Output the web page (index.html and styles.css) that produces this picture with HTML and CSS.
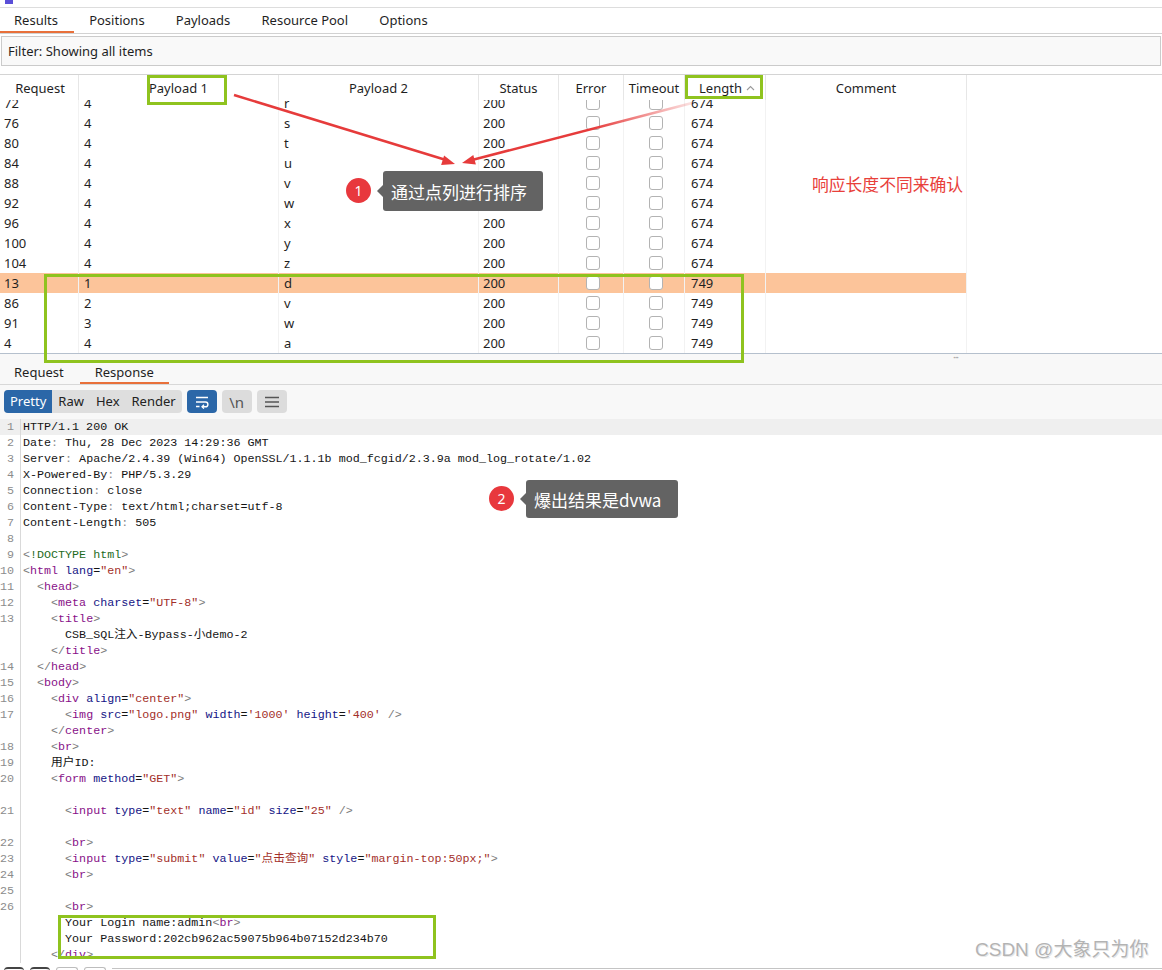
FILE: index.html
```html
<!DOCTYPE html>
<html lang="zh">
<head>
<meta charset="utf-8">
<title>Intruder Results</title>
<link rel="stylesheet" href="styles.css">
</head>
<body>
<div class="topstrip"><div class="appicon"></div></div>

<div class="tabs">
  <div class="tab first active">Results</div>
  <div class="tab">Positions</div>
  <div class="tab">Payloads</div>
  <div class="tab">Resource Pool</div>
  <div class="tab">Options</div>
</div>

<div class="filter">Filter: Showing all items</div>

<div class="table">
  <div class="thead">
    <div class="th c1">Request</div>
    <div class="th c2">Payload 1</div>
    <div class="th c3">Payload 2</div>
    <div class="th c4">Status</div>
    <div class="th c5">Error</div>
    <div class="th c6">Timeout</div>
    <div class="th c7">Length <svg class="caret" width="9" height="6" viewBox="0 0 9 6"><path d="M1 5 L4.5 1.5 L8 5" fill="none" stroke="#9a9a9a" stroke-width="1.1"/></svg></div>
    <div class="th c8">Comment</div>
  </div>
  <div class="tbody">
    <div class="rows">
      <div class="tr"><div class="td c1">72</div><div class="td c2">4</div><div class="td c3">r</div><div class="td c4">200</div><div class="td c5 cb"><i></i></div><div class="td c6 cb"><i></i></div><div class="td c7">674</div><div class="td c8"></div></div>
      <div class="tr"><div class="td c1">76</div><div class="td c2">4</div><div class="td c3">s</div><div class="td c4">200</div><div class="td c5 cb"><i></i></div><div class="td c6 cb"><i></i></div><div class="td c7">674</div><div class="td c8"></div></div>
      <div class="tr"><div class="td c1">80</div><div class="td c2">4</div><div class="td c3">t</div><div class="td c4">200</div><div class="td c5 cb"><i></i></div><div class="td c6 cb"><i></i></div><div class="td c7">674</div><div class="td c8"></div></div>
      <div class="tr"><div class="td c1">84</div><div class="td c2">4</div><div class="td c3">u</div><div class="td c4">200</div><div class="td c5 cb"><i></i></div><div class="td c6 cb"><i></i></div><div class="td c7">674</div><div class="td c8"></div></div>
      <div class="tr"><div class="td c1">88</div><div class="td c2">4</div><div class="td c3">v</div><div class="td c4">200</div><div class="td c5 cb"><i></i></div><div class="td c6 cb"><i></i></div><div class="td c7">674</div><div class="td c8"></div></div>
      <div class="tr"><div class="td c1">92</div><div class="td c2">4</div><div class="td c3">w</div><div class="td c4">200</div><div class="td c5 cb"><i></i></div><div class="td c6 cb"><i></i></div><div class="td c7">674</div><div class="td c8"></div></div>
      <div class="tr"><div class="td c1">96</div><div class="td c2">4</div><div class="td c3">x</div><div class="td c4">200</div><div class="td c5 cb"><i></i></div><div class="td c6 cb"><i></i></div><div class="td c7">674</div><div class="td c8"></div></div>
      <div class="tr"><div class="td c1">100</div><div class="td c2">4</div><div class="td c3">y</div><div class="td c4">200</div><div class="td c5 cb"><i></i></div><div class="td c6 cb"><i></i></div><div class="td c7">674</div><div class="td c8"></div></div>
      <div class="tr"><div class="td c1">104</div><div class="td c2">4</div><div class="td c3">z</div><div class="td c4">200</div><div class="td c5 cb"><i></i></div><div class="td c6 cb"><i></i></div><div class="td c7">674</div><div class="td c8"></div></div>
      <div class="tr sel"><div class="td c1">13</div><div class="td c2">1</div><div class="td c3">d</div><div class="td c4">200</div><div class="td c5 cb"><i></i></div><div class="td c6 cb"><i></i></div><div class="td c7">749</div><div class="td c8"></div></div>
      <div class="tr"><div class="td c1">86</div><div class="td c2">2</div><div class="td c3">v</div><div class="td c4">200</div><div class="td c5 cb"><i></i></div><div class="td c6 cb"><i></i></div><div class="td c7">749</div><div class="td c8"></div></div>
      <div class="tr"><div class="td c1">91</div><div class="td c2">3</div><div class="td c3">w</div><div class="td c4">200</div><div class="td c5 cb"><i></i></div><div class="td c6 cb"><i></i></div><div class="td c7">749</div><div class="td c8"></div></div>
      <div class="tr"><div class="td c1">4</div><div class="td c2">4</div><div class="td c3">a</div><div class="td c4">200</div><div class="td c5 cb"><i></i></div><div class="td c6 cb"><i></i></div><div class="td c7">749</div><div class="td c8"></div></div>
    </div>
  </div>
</div>

<div class="split"><span class="dots">···</span></div>

<div class="subtabs">
  <div class="tab first">Request</div>
  <div class="tab active">Response</div>
</div>

<div class="toolbar">
  <div class="seg"><span class="on">Pretty</span><span>Raw</span><span>Hex</span><span>Render</span></div>
  <div class="ibtn blue"><svg width="16" height="14" viewBox="0 0 16 14"><path d="M2 2.5 H14 M2 7 H11.5 A2.4 2.4 0 0 1 11.5 11.8 H8.5 M2 11.5 H5.5" fill="none" stroke="#fff" stroke-width="1.4"/><path d="M10 9.8 L8 11.8 L10 13.6" fill="none" stroke="#fff" stroke-width="1.3"/></svg></div>
  <div class="ibtn nl">\n</div>
  <div class="ibtn"><svg width="16" height="12" viewBox="0 0 16 12"><path d="M1 1.5 H15 M1 6 H15 M1 10.5 H15" stroke="#555" stroke-width="1.3"/></svg></div>
</div>

<div class="code">
  <div class="row cur"><span class="ln">1</span><span class="src">HTTP/1.1 200 OK</span></div>
  <div class="row"><span class="ln">2</span><span class="src">Date<span class="c">:</span> Thu, 28 Dec 2023 14:29:36 GMT</span></div>
  <div class="row"><span class="ln">3</span><span class="src">Server<span class="c">:</span> Apache/2.4.39 (Win64) OpenSSL/1.1.1b mod_fcgid/2.3.9a mod_log_rotate/1.02</span></div>
  <div class="row"><span class="ln">4</span><span class="src">X-Powered-By<span class="c">:</span> PHP/5.3.29</span></div>
  <div class="row"><span class="ln">5</span><span class="src">Connection<span class="c">:</span> close</span></div>
  <div class="row"><span class="ln">6</span><span class="src">Content-Type<span class="c">:</span> text/html;charset=utf-8</span></div>
  <div class="row"><span class="ln">7</span><span class="src">Content-Length<span class="c">:</span> 505</span></div>
  <div class="row"><span class="ln">8</span><span class="src"></span></div>
  <div class="row"><span class="ln">9</span><span class="src"><span class="p">&lt;</span><span class="d">!DOCTYPE html</span><span class="p">&gt;</span></span></div>
  <div class="row"><span class="ln">10</span><span class="src"><span class="p">&lt;</span><span class="t">html</span> <span class="a">lang</span>=<span class="v">"en"</span><span class="p">&gt;</span></span></div>
  <div class="row"><span class="ln">11</span><span class="src">  <span class="p">&lt;</span><span class="t">head</span><span class="p">&gt;</span></span></div>
  <div class="row"><span class="ln">12</span><span class="src">    <span class="p">&lt;</span><span class="t">meta</span> <span class="a">charset</span>=<span class="v">"UTF-8"</span><span class="p">&gt;</span></span></div>
  <div class="row"><span class="ln">13</span><span class="src">    <span class="p">&lt;</span><span class="t">title</span><span class="p">&gt;</span></span></div>
  <div class="row"><span class="ln"></span><span class="src">      CSB_SQL注入-Bypass-小demo-2</span></div>
  <div class="row"><span class="ln"></span><span class="src">    <span class="p">&lt;/</span><span class="t">title</span><span class="p">&gt;</span></span></div>
  <div class="row"><span class="ln">14</span><span class="src">  <span class="p">&lt;/</span><span class="t">head</span><span class="p">&gt;</span></span></div>
  <div class="row"><span class="ln">15</span><span class="src">  <span class="p">&lt;</span><span class="t">body</span><span class="p">&gt;</span></span></div>
  <div class="row"><span class="ln">16</span><span class="src">    <span class="p">&lt;</span><span class="t">div</span> <span class="a">align</span>=<span class="v">"center"</span><span class="p">&gt;</span></span></div>
  <div class="row"><span class="ln">17</span><span class="src">      <span class="p">&lt;</span><span class="t">img</span> <span class="a">src</span>=<span class="v">"logo.png"</span> <span class="a">width</span>=<span class="v">'1000'</span> <span class="a">height</span>=<span class="v">'400'</span> <span class="p">/&gt;</span></span></div>
  <div class="row"><span class="ln"></span><span class="src">    <span class="p">&lt;/</span><span class="t">center</span><span class="p">&gt;</span></span></div>
  <div class="row"><span class="ln">18</span><span class="src">    <span class="p">&lt;</span><span class="t">br</span><span class="p">&gt;</span></span></div>
  <div class="row"><span class="ln">19</span><span class="src">    用户ID:</span></div>
  <div class="row"><span class="ln">20</span><span class="src">    <span class="p">&lt;</span><span class="t">form</span> <span class="a">method</span>=<span class="v">"GET"</span><span class="p">&gt;</span></span></div>
  <div class="row"><span class="ln"></span><span class="src"></span></div>
  <div class="row"><span class="ln">21</span><span class="src">      <span class="p">&lt;</span><span class="t">input</span> <span class="a">type</span>=<span class="v">"text"</span> <span class="a">name</span>=<span class="v">"id"</span> <span class="a">size</span>=<span class="v">"25"</span> <span class="p">/&gt;</span></span></div>
  <div class="row"><span class="ln"></span><span class="src"></span></div>
  <div class="row"><span class="ln">22</span><span class="src">      <span class="p">&lt;</span><span class="t">br</span><span class="p">&gt;</span></span></div>
  <div class="row"><span class="ln">23</span><span class="src">      <span class="p">&lt;</span><span class="t">input</span> <span class="a">type</span>=<span class="v">"submit"</span> <span class="a">value</span>=<span class="v">"点击查询"</span> <span class="a">style</span>=<span class="v">"margin-top:50px;"</span><span class="p">&gt;</span></span></div>
  <div class="row"><span class="ln">24</span><span class="src">      <span class="p">&lt;</span><span class="t">br</span><span class="p">&gt;</span></span></div>
  <div class="row"><span class="ln">25</span><span class="src"></span></div>
  <div class="row"><span class="ln">26</span><span class="src">      <span class="p">&lt;</span><span class="t">br</span><span class="p">&gt;</span></span></div>
  <div class="row"><span class="ln"></span><span class="src">      Your Login name:admin<span class="p">&lt;</span><span class="t">br</span><span class="p">&gt;</span></span></div>
  <div class="row"><span class="ln"></span><span class="src">      Your Password:202cb962ac59075b964b07152d234b70</span></div>
  <div class="row"><span class="ln"></span><span class="src">    <span class="p">&lt;/</span><span class="t">div</span><span class="p">&gt;</span></span></div>
</div>

<div class="bottombar"><span class="bicon"></span><span class="bicon"></span><span class="bbtn"></span><span class="bbtn"></span><span class="bline"></span></div>

<!-- annotations overlay -->
<svg class="arrows" width="1162" height="970" viewBox="0 0 1162 970">
  <defs>
    <linearGradient id="fade" x1="692" y1="103" x2="470" y2="160" gradientUnits="userSpaceOnUse">
      <stop offset="0" stop-color="#e63b3b" stop-opacity="0.15"/>
      <stop offset="0.45" stop-color="#e63b3b" stop-opacity="1"/>
      <stop offset="1" stop-color="#e63b3b" stop-opacity="1"/>
    </linearGradient>
  </defs>
  <line x1="234" y1="95" x2="446" y2="160" stroke="#e63b3b" stroke-width="2.5"/>
  <polygon points="455,164 441.1,165 444.1,155.4" fill="#e63b3b"/>
  <line x1="692" y1="103" x2="472" y2="160" stroke="url(#fade)" stroke-width="2.5"/>
  <polygon points="462,163 473.3,154.9 475.9,164.5" fill="#e63b3b"/>
</svg>

<div class="gbox gb1"></div>
<div class="gbox gb2"></div>
<div class="gbox gb3"></div>
<div class="gbox gb4"></div>

<div class="num n1">1</div>
<div class="bubble b1">通过点列进行排序</div>
<div class="num n2">2</div>
<div class="bubble b2">爆出结果是dvwa</div>

<div class="note">响应长度不同来确认</div>
<div class="watermark">CSDN @大象只为你</div>
</body>
</html>
```

FILE: styles.css
```css
* { box-sizing: border-box; }
html, body { margin: 0; padding: 0; }
body {
  width: 1162px;
  height: 970px;
  overflow: hidden;
  position: relative;
  background: #ffffff;
  font-family: "Noto Sans", "Liberation Sans", sans-serif;
  font-size: 13px;
  color: #1f1f1f;
}

.topstrip { height: 8px; border-bottom: 1px solid #dddddd; }
.appicon { width: 8px; height: 4px; background: #5a4fd8; margin-left: 5px; }

.tabs { display: flex; height: 26px; border-bottom: 1px solid #d2d2d2; }
.tab {
  padding: 0 15.6px;
  display: flex;
  align-items: center;
  border-bottom: 2px solid transparent;
  white-space: nowrap;
}
.tab.first { padding-left: 14px; }
.tab.active { border-bottom-color: #e8703a; }

.filter {
  margin: 2px 1px 0;
  height: 30px;
  border: 1px solid #cbcbcb;
  background: #f9f9f9;
  padding-left: 6px;
  display: flex;
  align-items: center;
}

.table { margin-top: 8px; }
.thead {
  display: flex;
  height: 26px;
  border-top: 1px solid #d4d4d4;
  background: #ffffff;
}
.th {
  display: flex;
  align-items: center;
  justify-content: center;
  border-right: 1px solid #e6e6e6;
  white-space: nowrap;
}
.th.c1 { padding-left: 2px; }
.th.c7 { padding-left: 4px; }
.caret { margin-left: 4px; }
.c1 { width: 79px; }
.c2 { width: 200px; }
.c3 { width: 200px; }
.c4 { width: 80px; }
.c5 { width: 65px; }
.c6 { width: 61px; }
.c7 { width: 81px; }
.c8 { width: 201px; }

.tbody {
  height: 254px;
  overflow: hidden;
  border-bottom: 1px solid #b5c0cd;
}
.rows { margin-top: -7px; }
.tr { display: flex; height: 20px; line-height: 20px; }
.tr.sel .td { background: #fcc49a; }
.td {
  border-right: 1px solid #f2f2f2;
  padding-left: 5px;
  white-space: nowrap;
}
.td.c1 { padding-left: 4px; }
.td.c4 { padding-left: 4px; }
.td.c7 { padding-left: 6px; }
.td.cb {
  padding-left: 0;
  display: flex;
  align-items: center;
  justify-content: center;
}
.td.c5 { padding-left: 3px; }
.td.c6 { padding-left: 3px; }
.cb i {
  display: block;
  width: 14px;
  height: 14px;
  border: 1px solid #b3b3b3;
  border-radius: 3px;
  background: #ffffff;
}

.split {
  height: 8px;
  background: #f8f8f8;
}
.dots {
  display: block;
  margin-left: 953px;
  font-size: 10px;
  line-height: 6px;
  color: #a0a0a0;
  letter-spacing: -1px;
}

.subtabs {
  display: flex;
  height: 23px;
  background: #f8f8f8;
  border-bottom: 1px solid #d8d8d8;
}
.subtabs .tab { padding: 0 15px; }
.subtabs .tab.first { padding-left: 14px; padding-right: 16px; }

.toolbar {
  display: flex;
  gap: 5px;
  padding: 5px 4px 6px;
  background: #f8f8f8;
  height: 34px;
}
.seg {
  display: flex;
  height: 23px;
  background: #dedede;
  border-radius: 4px;
  overflow: hidden;
}
.seg span {
  padding: 0 6px;
  line-height: 23px;
  color: #222;
}
.seg span.on { background: #2b67a8; color: #ffffff; }
.ibtn {
  width: 30px;
  height: 23px;
  border-radius: 4px;
  background: #dcdcdc;
  display: flex;
  align-items: center;
  justify-content: center;
}
.ibtn.blue { background: #2b67a8; }
.ibtn.nl { font-size: 15px; color: #555; }

.code {
  font-family: "Liberation Mono", "Noto Sans CJK SC", monospace;
  font-size: 11.7px;
  line-height: 16px;
  color: #141414;
}
.row { display: flex; height: 16px; }
.row.cur { background: #efefef; }
.ln {
  width: 21px;
  flex: none;
  text-align: right;
  padding-right: 6px;
  border-right: 1px solid #d9d9d9;
  color: #8c8c8c;
}
.src { padding-left: 2px; white-space: pre; }
.p { color: #7a7a7a; }
.t { color: #881188; }
.a { color: #141485; }
.v { color: #a3302a; }
.d { color: #1d6b1d; }
.c { color: #8a8a8a; }

.bottombar {
  display: flex;
  align-items: flex-start;
  gap: 6px;
  height: 8px;
  padding-top: 4px;
  padding-left: 4px;
}
.bicon { width: 20px; height: 4px; border-top: 2px solid #444; border-radius: 6px 6px 0 0; }
.bbtn { width: 22px; height: 6px; border: 1px solid #bdbdbd; border-bottom: none; border-radius: 3px 3px 0 0; }
.bline { flex: 1; border-top: 1px solid #c4c4c4; margin-top: 1px; }

/* annotation overlay */
.arrows { position: absolute; left: 0; top: 0; pointer-events: none; }
.gbox {
  position: absolute;
  border: 3px solid #8fc31f;
  pointer-events: none;
}
.gb1 { left: 147px; top: 75px; width: 80px; height: 30px; }
.gb2 { left: 685px; top: 75px; width: 78px; height: 24px; }
.gb3 { left: 44px; top: 274px; width: 700px; height: 89px; }
.gb4 { left: 58px; top: 915px; width: 378px; height: 44px; }

.num {
  position: absolute;
  width: 25px;
  height: 25px;
  border-radius: 50%;
  background: #e8383d;
  color: #ffffff;
  font-family: "Noto Sans", sans-serif;
  font-size: 14px;
  line-height: 25px;
  text-align: center;
}
.n1 { left: 346px; top: 178px; }
.n2 { left: 489px; top: 486px; }

.bubble {
  position: absolute;
  background: #636363;
  color: #ffffff;
  border-radius: 3px;
  font-family: "Noto Sans CJK SC", "Noto Sans", sans-serif;
  font-size: 17px;
  padding-left: 8px;
  display: flex;
  align-items: center;
}
.bubble::before {
  content: "";
  position: absolute;
  left: -6px;
  top: 50%;
  margin-top: -6px;
  border-right: 6px solid #636363;
  border-top: 6px solid transparent;
  border-bottom: 6px solid transparent;
}
.b1 { left: 383px; top: 171px; width: 160px; height: 40px; }
.b2 { left: 526px; top: 480px; width: 152px; height: 38px; }

.note {
  position: absolute;
  left: 812px;
  top: 172px;
  color: #e8403a;
  font-family: "Noto Sans CJK SC", sans-serif;
  font-size: 16.8px;
  line-height: 24px;
}
.watermark {
  position: absolute;
  left: 975px;
  top: 937px;
  font-family: "Liberation Sans", "Noto Sans CJK SC", sans-serif;
  font-size: 19px;
  line-height: 26px;
  color: #b3b3b3;
  text-shadow: 0 0 1px #ffffff, 1px 1px 0 #e6e6e6;
  white-space: nowrap;
}
```
